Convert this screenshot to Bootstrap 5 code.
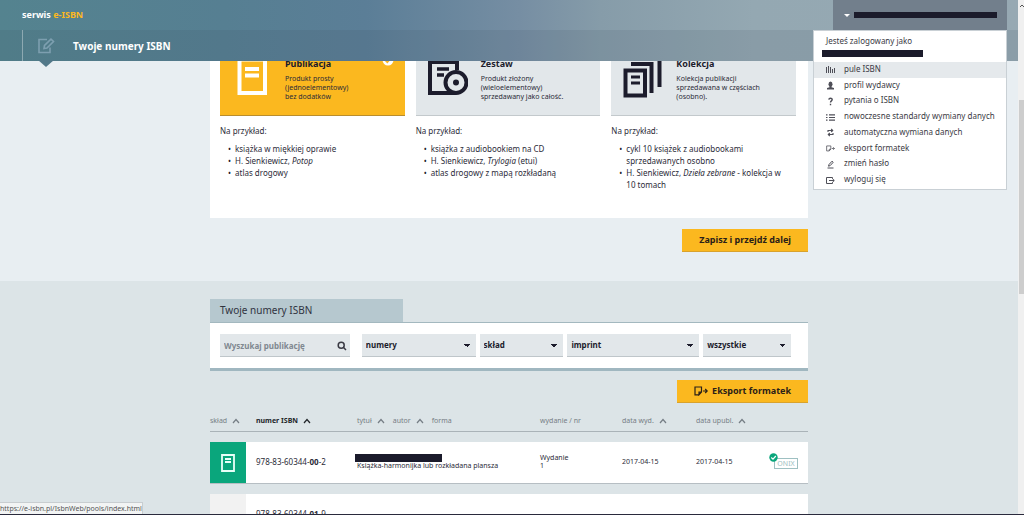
<!DOCTYPE html>
<html lang="pl">
<head>
<meta charset="utf-8">
<meta name="viewport" content="width=device-width, initial-scale=1">
<title>serwis e-ISBN</title>
<link href="https://cdn.jsdelivr.net/npm/bootstrap@5.3.0/dist/css/bootstrap.min.css" rel="stylesheet">
<style>
  :root { --ink: #1c1c2c; --gold: #fbb81f; --pale: #e2e7ea; --scroll: 6px; }
  body { font-family: "Noto Sans", "Open Sans", sans-serif; font-size: 8px; line-height: 12px; color: #2b2b38; background: #e8eef2; }
  a { color: inherit; text-decoration: none; }
  svg { display: block; flex: none; }

  /* header */
  .site-head { right: var(--scroll); z-index: 20; color: #fff; background: linear-gradient(90deg, #54838f 0, #567f92 22%, #5b7e97 36%, #768ea3 51%, #869ca9 59%, #94a8b2 74%, #97a9b3 100%); }
  .head-top { height: 30px; padding-left: 22px; font-size: 9px; }
  .head-sub { height: 31px; margin-left: 22px; font-size: 10px; }
  .head-band { background: rgba(60, 70, 90, .12); }
  .head-icon { width: 51px; height: 31px; padding: 8px 0 0 15px; border-left: 1px solid rgba(255, 255, 255, .35); }
  .head-icon::after { content: ""; position: absolute; left: 15px; top: 30px; border: 8px solid transparent; border-top: 7px solid #527889; border-bottom: 0; }
  .gold-text { color: var(--gold); }
  .user-btn { width: 174px; margin-right: 11px; padding: 0 10px 0 11px; background: #727f8c; border: 0; }
  .caret-down { border: 3px solid transparent; border-top-color: currentColor; border-bottom: 0; }
  .redacted { display: block; background: #1b1b2b; }
  .user-menu { top: 30px; right: 11px; width: 194px; height: 160px; background: #fff; border: 1px solid #c9d0d5; color: #3a3a44; }
  .user-menu .who { height: 31px; padding: 4px 8px 0; }
  .user-menu ul { height: 126px; }
  .user-menu a { padding: 0 0 2px 12px; gap: 9px; color: #3a3a44; }
  .user-menu a.active { background: #e5e9ec; }
  .user-menu svg { position: relative; top: 1px; color: #4f4f58; }

  /* publication kinds */
  .shell { max-width: 598px; }
  .kinds { display: grid; grid-template-columns: repeat(3, 1fr); column-gap: 11px; height: 218px; padding: 45px 12px 0 10px; background: #fff; }
  .kind-tile { height: 71px; padding: 13px 0 0 12px; gap: 13px; background: var(--pale); border-bottom: 1px solid #c3c9cc; line-height: 9px; font-size: 7px; }
  .kind-tile.chosen { background: var(--gold); border-color: #b98d2e; }
  .kind-tile h2 { margin: 0 0 4px; font-size: 9px; line-height: 12px; font-weight: 700; color: var(--ink); }
  .tick { right: 11px; top: 9px; }
  .kind-lead { padding-top: 9px; }
  .kind-list { list-style: none; padding: 0 4px 0 15px; margin: 6px 0 0; }
  .kind-list li { text-indent: -7px; }
  .kind-list li::before { content: "•"; display: inline-block; width: 7px; text-indent: 0; color: var(--ink); }
  .btn-gold { height: 23px; border: 0; border-radius: 0; border-bottom: 1px solid #d9a22c; padding: 0 17px; font-size: 9px; line-height: 12px; font-weight: 700; color: #2b2118; background: var(--gold); }

  /* numbers */
  .numbers { margin-top: 29px; padding-top: 18px; background: #dce4e7; min-height: 260px; }
  .tab-title { width: 193px; height: 23px; padding: 0 10px; margin: 0; font-size: 10px; font-weight: 400; line-height: 23px; background: #b6c8cf; color: #30333f; }
  .filters { height: 49px; padding: 11px 17px 0 10px; gap: 4px; background: #fff; border-top: 1px solid #a3b8bf; border-bottom: 3px solid #a0b7c0; }
  .field { height: 23px; padding: 0 4px; border: 0; border-bottom: 1px solid #bfc6ca; border-radius: 0; background-color: var(--pale); color: var(--ink); font-size: 8px; font-weight: 700; line-height: 12px; }
  .field::placeholder { color: #808890; opacity: 1; }
  .pick { appearance: none; background-image: linear-gradient(45deg, transparent 50%, var(--ink) 50%), linear-gradient(-45deg, transparent 50%, var(--ink) 50%); background-image: linear-gradient(to top right, transparent 50%, var(--ink) 50%), linear-gradient(to top left, transparent 50%, var(--ink) 50%); background-size: 3px 3px; background-position: right 9px center, right 6px center; background-repeat: no-repeat; }
  .search-box { flex: 130 1 130px; margin-right: 8px; }
  .search-box svg { right: 3px; top: 7px; }
  .f-num { flex: 114 1 114px; } .f-set { flex: 84 1 84px; } .f-imp { flex: 132 1 132px; } .f-all { flex: 88 1 88px; }

  .isbn-table { table-layout: fixed; border-collapse: separate; border-spacing: 0 10px; margin-top: -2px; }
  .isbn-table th { height: 21px; padding: 0; font-size: 7px; font-weight: 400; color: #767e85; border-bottom: 1px solid #aab3b8; white-space: nowrap; }
  .isbn-table th button { padding: 0; border: 0; background: none; color: inherit; font-weight: inherit; }
  .isbn-table th svg { display: inline-block; margin-left: 5px; }
  .isbn-table td { height: 42px; padding: 0 0 2px; font-size: 7px; line-height: 8px; vertical-align: middle; background: #fff; border-bottom: 1px solid #b6bec3; }
  .isbn-table .isbn { padding-left: 10px; font-size: 8px; }
  .isbn-table .kind-green { background: #0aa67c; padding: 0 0 0 11px; }
  .isbn-table .kind-blank { background: #f2f2f2; }
  .onix { width: 29px; height: 17px; }
  .onix a { right: 0; bottom: 1px; width: 24px; height: 11px; border: 1px solid #9ec0c2; line-height: 9px; text-align: center; color: #9ec0c2; }
  .onix svg { left: 0; top: 0; }
  .c-kind { width: 36px; } .c-isbn { width: 111px; } .c-ed { width: 82px; } .c-d1 { width: 74px; } .c-d2 { width: 73px; } .c-onix { width: 39px; }

  .status-url { left: 0; bottom: 1px; height: 12px; font-size: 7px; line-height: 12px; background: #f2f4f4; border: 1px solid #c8cdd0; border-left: 0; border-bottom: 0; color: #555; z-index: 30; }
  .end-line { left: 0; right: 0; bottom: 0; height: 1px; background: #2a2a3c; z-index: 30; }
  .scroll-rail { width: var(--scroll); background: #f0f0f0; }
  .scroll-rail svg { margin: 4px 0 0 2px; }
  .scroll-rail i { left: 1px; right: 0; top: 19.4%; height: 37.7%; background: #cdcdcd; }
</style>
</head>
<body class="vh-100 overflow-hidden d-flex">
<svg width="0" height="0" class="position-absolute" aria-hidden="true">
  <symbol id="up" viewBox="0 0 8 6"><path d="M1 5 4 1.5 7 5" fill="none" stroke="currentColor" stroke-width="1.2"/></symbol>
  <symbol id="export" viewBox="0 0 14 10"><path d="M5 8.8H1V1h6.500v5L5 8.800V6.200h2.500M9 5h4M11.200 3 13.200 5l-2 2" fill="none" stroke="currentColor" stroke-width="1.200"/></symbol>
</svg>

<div class="flex-grow-1 overflow-hidden">
  <header class="site-head fixed-top">
    <div class="head-top d-flex justify-content-between">
      <a href="#" class="fw-bold align-self-center">serwis <span class="gold-text">e-ISBN</span></a>
      <button type="button" class="user-btn d-flex align-items-center text-white" aria-label="Konto" aria-expanded="true">
        <span class="caret-down me-1"></span><span class="redacted flex-grow-1" style="height:6px"></span>
      </button>
    </div>
    <div class="head-band">
      <div class="head-sub d-flex align-items-center">
        <div class="head-icon position-relative">
          <svg width="17" height="16" viewBox="0 0 17 16" fill="none" stroke="#7d9fb0" stroke-width="1.600"><path d="M9 1.500H1v13h11V9.500"/><path d="M6 10.500 6.500 7.500 13 1.200 15.500 3.500 9 10Z"/></svg>
        </div>
        <h1 class="m-0 fw-bold" style="font-size:inherit">Twoje numery ISBN</h1>
      </div>
    </div>
    <nav class="user-menu position-absolute d-flex flex-column">
      <div class="who"><div class="ps-1">Jesteś zalogowany jako</div><span class="redacted" style="height:7px;width:101px;margin-top:3px"></span></div>
      <ul class="list-unstyled m-0 d-flex flex-column">
        <li class="d-flex flex-fill"><a class="active d-flex align-items-center flex-fill" href="#"><svg width="9" height="9" viewBox="0 0 9 9" stroke="currentColor"><path d="M.5 2v6M2.500 1v7M4.500 2v6M6.500 4v4M8.500 3v5"/></svg>pule ISBN</a></li>
        <li class="d-flex flex-fill"><a class="d-flex align-items-center flex-fill" href="#"><svg width="9" height="9" viewBox="0 0 9 9" fill="currentColor"><ellipse cx="4.500" cy="3.200" rx="2" ry="2.700"/><path d="M3.500 5h2v1.200l2.500.8V8.500H1V7l2.500-.8Z"/></svg>profil wydawcy</a></li>
        <li class="d-flex flex-fill"><a class="d-flex align-items-center flex-fill" href="#"><svg width="9" height="9" viewBox="0 0 9 9" fill="none" stroke="currentColor" stroke-width="1.400"><path d="M2.800 2.600C3 .8 6.200.8 6.200 2.600 6.200 3.900 4.500 3.900 4.500 5.600M4.500 6.800V8.300"/></svg>pytania o ISBN</a></li>
        <li class="d-flex flex-fill"><a class="d-flex align-items-center flex-fill" href="#"><svg width="9" height="9" viewBox="0 0 9 9" stroke="currentColor" stroke-width="1.200"><path d="M0 1.800h1.500M3 1.800h6M0 4.500h1.500M3 4.500h6M0 7.200h1.500M3 7.200h6"/></svg>nowoczesne standardy wymiany danych</a></li>
        <li class="d-flex flex-fill"><a class="d-flex align-items-center flex-fill" href="#"><svg width="9" height="9" viewBox="0 0 9 9" fill="none" stroke="currentColor" stroke-width="1.100"><path d="M2 4V2.500H6.500M5.200 1 6.700 2.500 5.200 4M7 5V6.500H2.500M3.800 5 2.300 6.500 3.800 8"/></svg>automatyczna wymiana danych</a></li>
        <li class="d-flex flex-fill"><a class="d-flex align-items-center flex-fill" href="#"><svg width="9" height="7"><use href="#export"/></svg>eksport formatek</a></li>
        <li class="d-flex flex-fill"><a class="d-flex align-items-center flex-fill" href="#"><svg width="9" height="9" viewBox="0 0 9 9" fill="none" stroke="currentColor"><path d="M2.500 6.200 3 4.500 6 1.200 7.200 2.300 4.200 5.600ZM1.500 8h6"/></svg>zmień hasło</a></li>
        <li class="d-flex flex-fill"><a class="d-flex align-items-center flex-fill" href="#"><svg width="9" height="9" viewBox="0 0 9 9" fill="none" stroke="currentColor"><path d="M6.500 2.800V1.500H.5v6h6V6.200M3 4.500h5M6.500 2.800 8.300 4.500 6.500 6.200"/></svg>wyloguj się</a></li>
      </ul>
    </nav>
  </header>

  <main>
    <section class="shell mx-auto">
      <div class="kinds">
        <article>
          <div class="kind-tile chosen d-flex position-relative">
            <svg width="40" height="40" viewBox="0 0 40 40"><path d="M7.500 1.500H33V35H7.500Z" fill="none" stroke="#fff" stroke-width="4"/><path d="M13 11h14M13 17.500h14" stroke="#fff" stroke-width="4"/></svg>
            <div><h2>Publikacja</h2>Produkt prosty<br>(jednoelementowy)<br>bez dodatków</div>
            <svg class="tick position-absolute" width="12" height="12" viewBox="0 0 12 12"><circle cx="6" cy="6" r="5.500" fill="#fff"/><path d="M3 6 5.300 8.300 9 4" fill="none" stroke="#fbb81f" stroke-width="1.500"/></svg>
          </div>
          <div class="kind-lead">Na przykład:</div>
          <ul class="kind-list"><li>książka w miękkiej oprawie</li><li>H. Sienkiewicz, <em>Potop</em></li><li>atlas drogowy</li></ul>
        </article>
        <article>
          <div class="kind-tile d-flex">
            <svg width="40" height="40" viewBox="0 0 40 40" fill="none" stroke="#1c1c2c" stroke-width="4"><path d="M29 12V4H2V35H28"/><path d="M9 11h12M9 17h7" stroke-width="3.500"/><circle cx="28" cy="24.500" r="10.500"/><circle cx="28" cy="24.500" r="3" fill="#1c1c2c" stroke="none"/></svg>
            <div><h2>Zestaw</h2>Produkt złożony<br>(wieloelementowy)<br>sprzedawany jako całość.</div>
          </div>
          <div class="kind-lead">Na przykład:</div>
          <ul class="kind-list"><li>książka z audiobookiem na CD</li><li>H. Sienkiewicz, <em>Trylogia</em> (etui)</li><li>atlas drogowy z mapą rozkładaną</li></ul>
        </article>
        <article>
          <div class="kind-tile d-flex">
            <svg width="40" height="40" viewBox="0 0 40 40" fill="none" stroke="#1c1c2c" stroke-width="4"><path d="M2.500 12.500H22V37.500H2.500Z"/><path d="M8 19h9M8 25h9" stroke-width="3"/><path d="M8 6H28.500V35"/><path d="M14 0H36.500V29"/></svg>
            <div><h2>Kolekcja</h2>Kolekcja publikacji<br>sprzedawana w częściach<br>(osobno).</div>
          </div>
          <div class="kind-lead">Na przykład:</div>
          <ul class="kind-list"><li>cykl 10 książek z audiobookami sprzedawanych osobno</li><li>H. Sienkiewicz, <em>Dzieła zebrane</em> - kolekcja w 10&nbsp;tomach</li></ul>
        </article>
      </div>
      <div class="text-end" style="padding-top:11px"><button type="button" class="btn btn-gold d-inline-block align-top">Zapisz i przejdź dalej</button></div>
    </section>

    <section class="numbers">
      <div class="shell mx-auto">
        <h2 class="tab-title">Twoje numery ISBN</h2>
        <form class="filters d-flex">
          <div class="search-box position-relative">
            <input class="field w-100" type="search" placeholder="Wyszukaj publikację" aria-label="Wyszukaj publikację">
            <svg class="position-absolute" width="10" height="10" viewBox="0 0 10 10" fill="none" stroke="#3a3a44" stroke-width="1.500"><circle cx="4.200" cy="4.200" r="3"/><path d="M6.300 6.300 9 9"/></svg>
          </div>
          <select class="field pick f-num" aria-label="numery"><option>numery</option></select>
          <select class="field pick f-set" aria-label="skład"><option>skład</option></select>
          <select class="field pick f-imp" aria-label="imprint"><option>imprint</option></select>
          <select class="field pick f-all" aria-label="wszystkie"><option>wszystkie</option></select>
        </form>
        <div class="d-flex justify-content-end" style="padding-top:9px">
          <button type="button" class="btn btn-gold d-flex align-items-center gap-1"><svg width="14" height="10"><use href="#export"/></svg>Eksport formatek</button>
        </div>
        <table class="isbn-table w-100">
          <colgroup><col class="c-kind"><col class="c-isbn"><col><col class="c-ed"><col class="c-d1"><col class="c-d2"><col class="c-onix"></colgroup>
          <thead>
            <tr>
              <th><button type="button">skład<svg width="8" height="6"><use href="#up"/></svg></button></th>
              <th class="fw-bold text-dark" style="padding-left:10px"><button type="button">numer ISBN<svg width="8" height="6"><use href="#up"/></svg></button></th>
              <th><div class="d-flex gap-2"><button type="button">tytuł<svg width="8" height="6"><use href="#up"/></svg></button><button type="button">autor<svg width="8" height="6"><use href="#up"/></svg></button><span>forma</span></div></th>
              <th>wydanie / nr</th>
              <th><button type="button">data wyd.<svg width="8" height="6"><use href="#up"/></svg></button></th>
              <th><button type="button">data upubl.<svg width="8" height="6"><use href="#up"/></svg></button></th>
              <th></th>
            </tr>
          </thead>
          <tbody>
            <tr>
              <td class="kind-green"><svg width="14" height="18" viewBox="0 0 14 18" fill="none" stroke="#e8fff8" stroke-width="1.800"><path d="M1 1H13V17H1ZM4 5h6M4 8h6"/></svg></td>
              <td class="isbn">978-83-60344-<b>00</b>-2</td>
              <td><span class="redacted" style="height:8px;width:87px;margin-left:-2px"></span>Książka-harmonijka lub rozkładana plansza</td>
              <td>Wydanie<br>1</td>
              <td>2017-04-15</td>
              <td>2017-04-15</td>
              <td><div class="onix position-relative"><a href="#" class="position-absolute">ONIX</a><svg class="position-absolute" width="9" height="9" viewBox="0 0 9 9"><circle cx="4.500" cy="4.500" r="4.200" fill="#0aa67c"/><path d="M2.300 4.500 4 6.200 6.800 3" fill="none" stroke="#fff" stroke-width="1.200"/></svg></div></td>
            </tr>
            <tr>
              <td class="kind-blank"></td>
              <td class="isbn">978-83-60344-<b>01</b>-9</td>
              <td></td><td></td><td></td><td></td><td></td>
            </tr>
          </tbody>
        </table>
      </div>
    </section>
  </main>
</div>

<aside class="scroll-rail position-relative" aria-hidden="true">
  <svg width="4" height="4" viewBox="0 0 4 4" fill="none" stroke="#555"><path d="M0 3 2 1 4 3"/></svg>
  <i class="position-absolute"></i>
</aside>
<div class="status-url position-fixed">https://e-isbn.pl/IsbnWeb/pools/index.html</div>
<div class="end-line position-fixed"></div>
<script src="https://cdn.jsdelivr.net/npm/bootstrap@5.3.0/dist/js/bootstrap.bundle.min.js"></script>
</body>
</html>
